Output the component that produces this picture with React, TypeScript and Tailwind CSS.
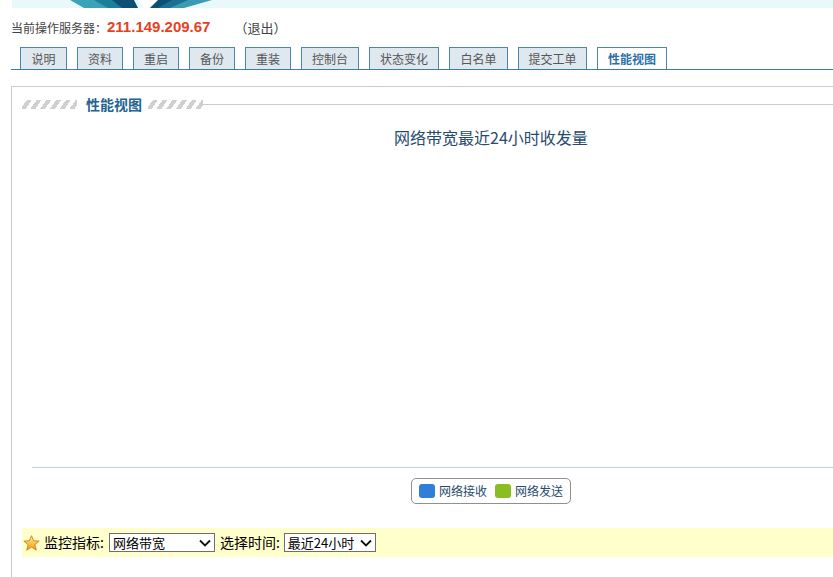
import { useState } from "react";

const tabs = [
  { label: "说明", w: "w-[47px]" },
  { label: "资料", w: "w-[46px]" },
  { label: "重启", w: "w-[46px]" },
  { label: "备份", w: "w-[46px]" },
  { label: "重装", w: "w-[46px]" },
  { label: "控制台", w: "w-[58px]" },
  { label: "状态变化", w: "w-[70px]" },
  { label: "白名单", w: "w-[59px]" },
  { label: "提交工单", w: "w-[69px]" },
  { label: "性能视图", w: "w-[70px]" },
];

function Banner() {
  return (
    <div className="h-[8px] bg-[#eaf8fb] ml-[12px] overflow-hidden">
      <svg width="821" height="8" viewBox="0 0 821 8">
        <rect x="0" y="0" width="821" height="8" fill="#e8f8fb" />
        <polygon points="58,0 92,0 98,8 72,8" fill="#3aa3b8" />
        <polygon points="82,0 112,0 118,8 96,8" fill="#1d7e9a" />
        <polygon points="100,0 122,0 126,8 110,8" fill="#0d4f73" />
        <polygon points="126,0 146,0 136,8 132,8" fill="#ffffff" />
        <polygon points="146,0 166,0 148,8 138,8" fill="#0d4f73" />
        <polygon points="160,0 182,0 160,8 146,8" fill="#1a6f92" />
        <polygon points="176,0 200,0 172,8 158,8" fill="#3c9ab5" />
      </svg>
    </div>
  );
}

function Stripes() {
  return <div className="h-[9px] w-[55px] bg-[repeating-linear-gradient(125deg,transparent_0_4px,#cfcfcf_4px_8px)]" />;
}

function Chevron() {
  return (
    <svg width="12" height="8" viewBox="0 0 12 8" className="shrink-0">
      <path d="M1 1.5 L6 6.5 L11 1.5" fill="none" stroke="#111" strokeWidth="1.8" />
    </svg>
  );
}

function FakeSelect({ value, width }: { value: string; width: string }) {
  return (
    <div className={`${width} h-[19px] border border-[#6f6f6f] bg-white flex items-center justify-between pl-[3px] pr-[3px] text-[13px] text-black`}>
      <span className="leading-none">{value}</span>
      <Chevron />
    </div>
  );
}

export default function App() {
  const [active] = useState("性能视图");

  return (
    <div className="w-[833px] h-[577px] overflow-hidden bg-white font-['Noto_Sans_CJK_SC','Noto_Sans',sans-serif]">
      <Banner />

      <div className="h-[39px] flex items-center pl-[11px] text-[12px] text-[#444]">
        <span>当前操作服务器：</span>
        <span className="font-['Liberation_Sans',sans-serif] font-bold text-[15px] text-[#e2421f]">211.149.209.67</span>
        <span className="ml-[24px] text-[13px]">（退出）</span>
      </div>

      <div className="ml-[11px] w-[900px] border-b border-[#3d7ca6] pl-[9px] flex gap-[10px]">
        {tabs.map((tab) => {
          const on = tab.label === active;
          return (
            <div
              key={tab.label}
              className={`${tab.w} h-[22px] border border-b-0 border-[#4b86b0] flex items-center justify-center text-[12px] ${on ? "bg-white text-[#2d70a8] font-bold" : "bg-[#dfe7ef] text-[#555]"}`}
            >
              {tab.label}
            </div>
          );
        })}
      </div>

      <div className="mt-[16px] ml-[11px] w-[1000px] h-[600px] border-l border-t border-[#cccccc]">
        <div className="h-[34px] flex items-center pl-[10px]">
          <Stripes />
          <span className="ml-[9px] mr-[6px] text-[14px] font-bold text-[#22648f]">性能视图</span>
          <Stripes />
          <div className="flex-1 h-px bg-[#cccccc]" />
        </div>

        <div className="w-[958px]">
          <div className="h-[32px] flex items-center justify-center text-[16px] text-[#274b6d]">
            网络带宽最近24小时收发量
          </div>
          <div className="h-[314px]" />
          <div className="ml-[20px] h-px bg-[#c0d0e0]" />
          <div className="mt-[10px] flex justify-center">
            <div className="h-[26px] px-[7px] rounded-[5px] border border-[#909090] flex items-center gap-[4px] text-[12px] text-[#274b6d]">
              <span className="w-[16px] h-[14px] rounded-[3px] bg-[#2f7ed8]" />
              <span className="mr-[4px]">网络接收</span>
              <span className="w-[16px] h-[14px] rounded-[3px] bg-[#8bbc21]" />
              <span>网络发送</span>
            </div>
          </div>
        </div>

        <div className="mt-[24px] ml-[10px] h-[29px] bg-[#ffffcc] flex items-center text-[14px] text-black">
          <svg width="17" height="16" viewBox="0 0 24 23" className="ml-[1px]">
            <defs>
              <linearGradient id="st" x1="0" y1="0" x2="0" y2="1">
                <stop offset="0" stopColor="#fff3a0" />
                <stop offset="1" stopColor="#f29a0e" />
              </linearGradient>
            </defs>
            <polygon
              points="12,1 15,8.3 23,8.8 16.8,13.9 18.9,21.8 12,17.4 5.1,21.8 7.2,13.9 1,8.8 9,8.3"
              fill="url(#st)"
              stroke="#c97a06"
              strokeWidth="1.2"
              strokeLinejoin="round"
            />
          </svg>
          <span className="ml-[4px] mr-[5px]">监控指标:</span>
          <FakeSelect value="网络带宽" width="w-[106px]" />
          <span className="ml-[5px] mr-[4px]">选择时间:</span>
          <FakeSelect value="最近24小时" width="w-[92px]" />
        </div>
      </div>
    </div>
  );
}
